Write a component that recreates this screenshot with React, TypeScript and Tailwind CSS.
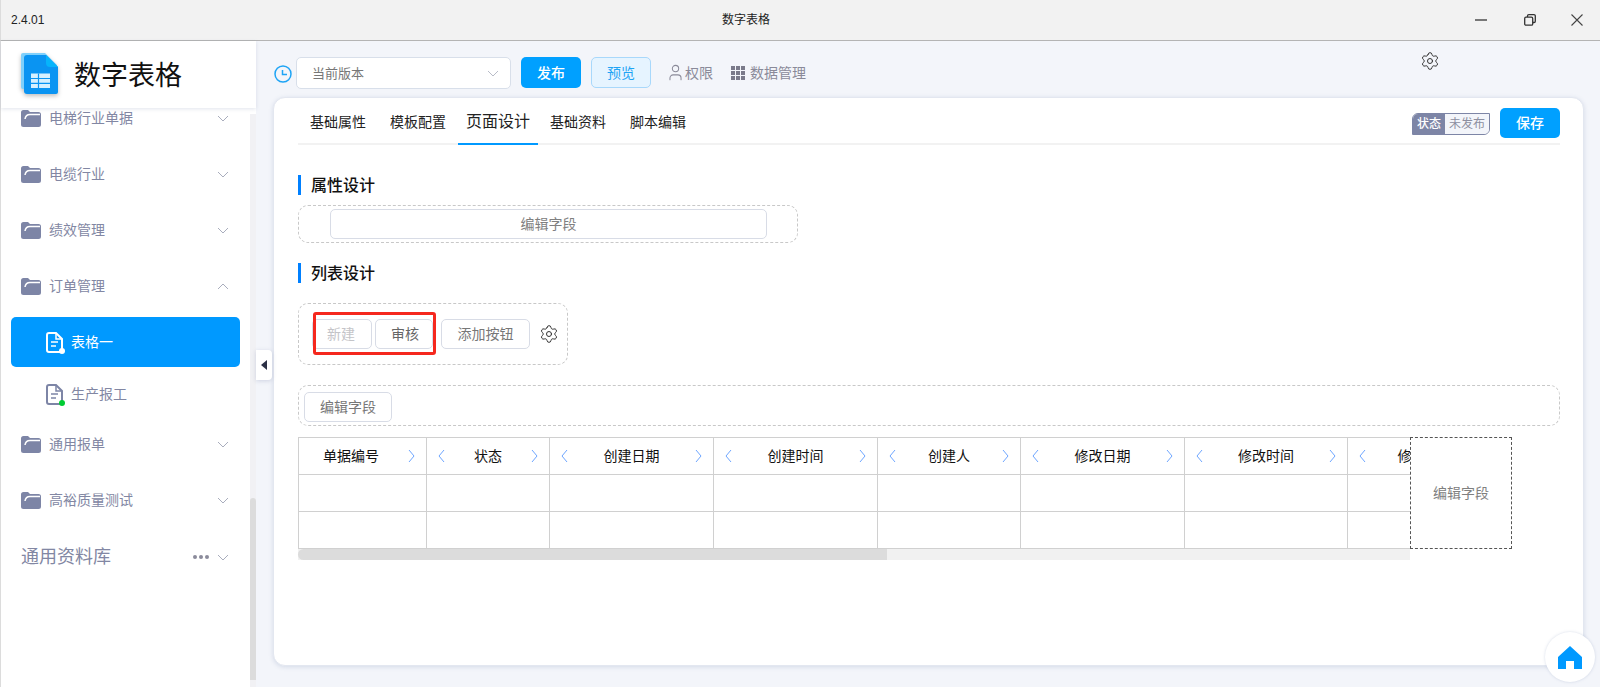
import { Settings, User } from "lucide-react";

const font = { fontFamily: '"Liberation Sans", "Noto Sans CJK SC", sans-serif' };

const Chevron = ({ dir, className }: { dir: "left" | "right" | "up" | "down"; className?: string }) => {
  const points = {
    left: "7,1 2,7 7,13",
    right: "2,1 7,7 2,13",
    up: "1,7 6,2 11,7",
    down: "1,2 6,7 11,2",
  }[dir];
  const size = dir === "left" || dir === "right" ? { w: 9, h: 14 } : { w: 12, h: 9 };
  return (
    <svg width={size.w} height={size.h} viewBox={`0 0 ${size.w} ${size.h}`} fill="none" className={className}>
      <polyline points={points} stroke="currentColor" strokeWidth="1" />
    </svg>
  );
};

const FolderIcon = () => (
  <svg width="20" height="17" viewBox="0 0 20 17" className="shrink-0">
    <path d="M2.5 0H7l2 2h8.5A2.5 2.5 0 0 1 20 4.500V14.500A2.500 2.500 0 0 1 17.500 17H2.500A2.500 2.500 0 0 1 0 14.500V2.500A2.500 2.500 0 0 1 2.500 0Z" fill="#7d85a6" />
    <path d="M4 9C4.500 5.500 6 4.500 9 4.500H19" stroke="#fff" strokeWidth="1.500" fill="none" />
  </svg>
);

const DocIcon = ({ color, dot }: { color: string; dot: string }) => (
  <span className="relative shrink-0 w-[17px] h-[21px]">
    <svg width="17" height="21" viewBox="0 0 17 21" fill="none">
      <path d="M3 1H10L16 7V18A2 2 0 0 1 14 20H3A2 2 0 0 1 1 18V3A2 2 0 0 1 3 1Z" stroke={color} strokeWidth="2" />
      <path d="M10 1V7H16" stroke={color} strokeWidth="1.500" />
      <path d="M5 10H12M5 14H10" stroke={color} strokeWidth="1.600" />
    </svg>
    <span className="absolute right-[-2px] bottom-[-1px] w-[6px] h-[6px] rounded-full" style={{ background: dot }} />
  </span>
);

const Logo = () => (
  <svg width="38" height="43" viewBox="0 0 38 43" className="drop-shadow-[0_2px_2px_rgba(0,0,0,0.25)]">
    <path d="M2 0H24L36 12V36H2A2 2 0 0 1 0 34V2A2 2 0 0 1 2 0Z" fill="#7fd0fb" />
    <path d="M6 2H25L37 14V39A2 2 0 0 1 35 41H6A3 3 0 0 1 3 38V5A3 3 0 0 1 6 2Z" fill="#0a94f2" />
    <path d="M25 2L37 14H29A4 4 0 0 1 25 10Z" fill="#06b4fb" />
    <path d="M10 20.500H29V35H10Z" fill="#d6f0ff" />
    <path d="M10 25.500H29M10 30.300H29M17.500 20.500V35" stroke="#0a94f2" strokeWidth="1.200" />
  </svg>
);

const menu = [
  { name: "电梯行业单据" },
  { name: "电缆行业" },
  { name: "绩效管理" },
  { name: "订单管理", open: true },
];

const MenuRow = ({ name, open }: { name: string; open?: boolean }) => (
  <div className="h-14 flex items-center pl-5 pr-[21px] text-[14px] text-[#8287a3] leading-none">
    <FolderIcon />
    <span className="ml-2 flex-1">{name}</span>
    <Chevron dir={open ? "up" : "down"} className="text-[#a9adbd]" />
  </div>
);

const Sidebar = () => (
  <aside className="relative w-[256px] shrink-0 bg-white border-l border-[#dcdcdc] flex flex-col">
    <div className="relative z-10 h-[67px] bg-white flex items-center pl-5 shadow-[0_1px_4px_rgba(120,130,170,0.22)]">
      <Logo />
      <span className="ml-[15px] mt-[3px] text-[27px] leading-none text-[#111]">数字表格</span>
    </div>
    <div className="flex-1 flex overflow-hidden">
      <div className="flex-1 -mt-[18px]">
        {menu.map((m) => (
          <MenuRow key={m.name} name={m.name} open={m.open} />
        ))}
        <div className="mt-[3px] ml-[10px] mr-[10px] h-[50px] rounded-[5px] bg-[#0099ff] flex items-center pl-[35px] text-white text-[14px] leading-none">
          <DocIcon color="#fff" dot="#fff" />
          <span className="ml-2">表格一</span>
        </div>
        <div className="mt-[2px] -mb-[3px] h-[50px] flex items-center pl-[45px] text-[#8287a3] text-[14px] leading-none">
          <DocIcon color="#7d85a6" dot="#00cc33" />
          <span className="ml-2">生产报工</span>
        </div>
        <MenuRow name="通用报单" />
        <MenuRow name="高裕质量测试" />
        <div className="h-14 pt-[2px] flex items-center pl-5 pr-[21px] text-[18px] text-[#8287a3] leading-none">
          <span className="flex-1">通用资料库</span>
          <span className="flex gap-[1.500px] mr-[8px]">
            <span className="w-[4.500px] h-[4.500px] rounded-full bg-[#8b8b9b]" />
            <span className="w-[4.500px] h-[4.500px] rounded-full bg-[#8b8b9b]" />
            <span className="w-[4.500px] h-[4.500px] rounded-full bg-[#8b8b9b]" />
          </span>
          <Chevron dir="down" className="text-[#a9adbd]" />
        </div>
      </div>
      <div className="w-[6px] mt-[6px] bg-[#f1f1f4] flex flex-col justify-end pb-[7px]">
        <div className="h-[182px] bg-[#dcdcdc] rounded-t-[3px]" />
      </div>
    </div>
    <button className="absolute z-20 left-[255px] top-[309px] w-4 h-[30px] bg-white rounded-r-[4px] shadow-[0_1px_4px_rgba(120,130,170,0.3)] flex items-center justify-center">
      <span className="w-0 h-0 border-y-[5px] border-y-transparent border-r-[6px] border-r-[#2b3045]" />
    </button>
  </aside>
);

const Dashed = ({ className, children }: { className: string; children: React.ReactNode }) => (
  <div className={`relative border border-dashed border-[#c8c8c8] rounded-[10px] ${className}`}>{children}</div>
);

const Btn = ({ className, children }: { className: string; children: React.ReactNode }) => (
  <div className={`h-[30px] flex items-center justify-center border border-[#d8dce6] rounded-[5px] bg-white text-[14px] leading-none pb-[1px] ${className}`}>
    {children}
  </div>
);

const SectionTitle = ({ title, className }: { title: string; className: string }) => (
  <div className={`h-5 flex items-center border-l-[3px] border-[#0080ff] pl-[10px] pt-[1px] text-[16px] font-medium leading-none text-[#111] ${className}`}>
    {title}
  </div>
);

const tabs = ["基础属性", "模板配置", "页面设计", "基础资料", "脚本编辑"];

const columns = ["单据编号", "状态", "创建日期", "创建时间", "创建人", "修改日期", "修改时间", "修改日期"];

const Table = () => (
  <div className="flex items-start mt-[11px]">
    <div className="w-[1112px] shrink-0">
      <div className="overflow-hidden h-[112px] border-t border-l border-[#d0d0d0]">
        <div className="grid w-[1300px] grid-cols-[128px_123px_164px_164px_143px_164px_163px_164px] auto-rows-[37px]">
          {columns.map((c, i) => (
            <div key={i} className="border-r border-b border-[#d0d0d0] flex items-center justify-between px-[10px] pb-[1px] text-[14px] leading-none text-[#111]">
              {i > 0 && <Chevron dir="left" className="text-[#6ea6ff] shrink-0" />}
              <span className={i === 0 ? "flex-1 text-center pr-[14px]" : i === 7 ? "flex-1 text-center pr-[8px]" : "flex-1 text-center"}>{c}</span>
              <Chevron dir="right" className="text-[#6ea6ff] shrink-0" />
            </div>
          ))}
          {[0, 1].map((r) =>
            columns.map((c, i) => <div key={`${r}-${c}-${i}`} className="border-r border-b border-[#d0d0d0]" />)
          )}
        </div>
      </div>
      <div className="h-[11px] bg-[#f1f1f1]">
        <div className="h-full w-[589px] bg-[#dcdcdc] rounded-l-[6px]" />
      </div>
    </div>
    <div className="w-[102px] h-[112px] shrink-0 border border-dashed border-[#555] flex items-center justify-center text-[14px] leading-none text-[#808080]">
      编辑字段
    </div>
  </div>
);

export default function App() {
  return (
    <div className="w-[1600px] h-[687px] overflow-hidden flex flex-col bg-[#f3f5fa]" style={font}>
      <header className="h-[41px] shrink-0 bg-[#f2f2f2] border-b border-l border-b-[#b4b4b4] border-l-[#dcdcdc] relative flex items-center pl-[10px] text-[12px] text-[#222] leading-none">
        <span className="flex-1">2.4.01</span>
        <span className="absolute left-[721px]">数字表格</span>
        <svg width="12" height="2" viewBox="0 0 12 2" className="mr-[37px] -mt-[1px]">
          <path d="M0 1H12" stroke="#777" strokeWidth="2" />
        </svg>
        <svg width="12" height="12" viewBox="0 0 12 12" fill="none" className="mr-[35px] -mt-[1px]">
          <rect x="0.700" y="3.200" width="8" height="8" rx="1.300" stroke="#333" strokeWidth="1.300" />
          <path d="M3.500 3V2A1.300 1.300 0 0 1 4.800 0.700H10A1.300 1.300 0 0 1 11.300 2V7.200A1.300 1.300 0 0 1 10 8.500H9" stroke="#333" strokeWidth="1.300" />
        </svg>
        <svg width="12" height="12" viewBox="0 0 12 12" fill="none" className="mr-[17px] -mt-[1px]">
          <path d="M0.500 0.500L11.500 11.500M11.500 0.500L0.500 11.500" stroke="#444" strokeWidth="1.100" />
        </svg>
      </header>
      <div className="flex-1 flex min-h-0">
        <Sidebar />
        <main className="flex-1 min-w-0 flex flex-col">
          <div className="h-14 shrink-0 flex items-start pl-[18px] pt-4">
            <svg width="18" height="18" viewBox="0 0 18 18" fill="none" className="mt-[8px]">
              <circle cx="9" cy="9" r="8" stroke="#1ea4f5" strokeWidth="1.500" />
              <path d="M8.500 5V9.500H13" stroke="#1ea4f5" strokeWidth="1.500" />
            </svg>
            <div className="ml-[4px] w-[215px] h-8 bg-white border border-[#d8dfea] rounded-[5px] flex items-center justify-between pl-[15px] pr-[11px] text-[13px] leading-none text-[#777]">
              当前版本
              <Chevron dir="down" className="text-[#b8bcc8]" />
            </div>
            <div className="ml-[10px] w-[60px] h-[31px] rounded-[5px] bg-[#00a0ff] text-white text-[14px] font-medium leading-none flex items-center justify-center">发布</div>
            <div className="ml-[10px] w-[60px] h-[31px] rounded-[5px] bg-[#e6f4ff] border border-[#a8d8fb] text-[#1ea4f5] text-[14px] leading-none flex items-center justify-center">预览</div>
            <div className="ml-[15px] h-[31px] flex items-center text-[14px] leading-none text-[#8a8a99]">
              <User size={19} strokeWidth={1.300} className="text-[#8a8a99]" />
              <span className="ml-0">权限</span>
            </div>
            <div className="ml-[18px] h-[31px] flex items-center text-[14px] leading-none text-[#8a8a99]">
              <div className="grid grid-cols-3 gap-[1px] w-[14px]">
                {[0, 1, 2, 3, 4, 5, 6, 7, 8].map((i) => (
                  <span key={i} className="h-[4px] bg-[#7a7a8a]" />
                ))}
              </div>
              <span className="ml-[5px]">数据管理</span>
            </div>
            <Settings size={20} strokeWidth={1.200} className="ml-auto mr-[160px] -mt-[6px] text-[#333]" />
          </div>
          <section className="ml-[17px] mr-[16px] h-[569px] bg-white rounded-[12px] border border-[#e3e7f0] shadow-[0_1px_4px_rgba(120,140,180,0.25)] pl-[24px] pr-[23px]">
            <div className="h-[47px] flex border-b-2 border-[#f2f2f2]">
              {tabs.map((t) => {
                const active = t === "页面设计";
                return (
                  <div
                    key={t}
                    className={
                      active
                        ? "h-[47px] px-2 pt-[3px] flex items-center text-[16px] leading-none text-[#222] border-b-2 border-[#0099ff]"
                        : "h-[47px] px-3 pt-[1px] flex items-center text-[14px] leading-none text-[#222]"
                    }
                  >
                    {t}
                  </div>
                );
              })}
              <div className="ml-auto flex items-start pt-[10px]">
                <div className="flex h-[22px] mt-[5px] text-[12px] leading-none rounded-br-[6px] rounded-tl-[6px] border border-[#7d85a6] overflow-hidden">
                  <span className="w-[32px] bg-[#7d85a6] text-white font-medium flex items-center justify-center">状态</span>
                  <span className="w-[44px] bg-[#f3f5fa] text-[#8d8fa0] flex items-center justify-center">未发布</span>
                </div>
                <div className="ml-[10px] w-[60px] h-[30px] rounded-[5px] bg-[#00a0ff] text-white text-[14px] font-medium leading-none flex items-center justify-center">保存</div>
              </div>
            </div>

            <SectionTitle title="属性设计" className="mt-[30px]" />
            <Dashed className="mt-[10px] w-[500px] h-[38px] pl-[31px] pt-[3px]">
              <Btn className="w-[437px] text-[#808080]">编辑字段</Btn>
            </Dashed>

            <SectionTitle title="列表设计" className="mt-[20px]" />
            <Dashed className="mt-[20px] w-[270px] h-[62px] pl-[13px] flex items-center gap-[3px]">
              <Btn className="w-[60px] text-[#c4c4c8] pr-[2px]">新建</Btn>
              <Btn className="w-[58px] text-[#666] pl-[2px]">审核</Btn>
              <Btn className="ml-[5px] w-[89px] text-[#777]">添加按钮</Btn>
              <Settings size={20} strokeWidth={1.200} className="ml-[6px] text-[#333]" />
              <div className="absolute left-[14px] top-[8px] w-[123px] h-[43px] border-[3px] border-[#f5281e] rounded-[3px]" />
            </Dashed>

            <Dashed className="mt-[20px] h-[41px] pl-[5px] pt-[6px]">
              <Btn className="w-[88px] h-[29px] text-[#777]">编辑字段</Btn>
            </Dashed>

            <Table />
          </section>
        </main>
      </div>
      <div className="absolute left-[1545px] top-[632px] w-[50px] h-[50px] rounded-full bg-white shadow-[0_0_3px_rgba(120,140,180,0.3)] flex items-center justify-center">
        <svg width="24" height="23" viewBox="0 0 24 23">
          <path d="M12 0L24 11V23H16V15H8V23H0V11Z" fill="#0099ff" />
        </svg>
      </div>
    </div>
  );
}
